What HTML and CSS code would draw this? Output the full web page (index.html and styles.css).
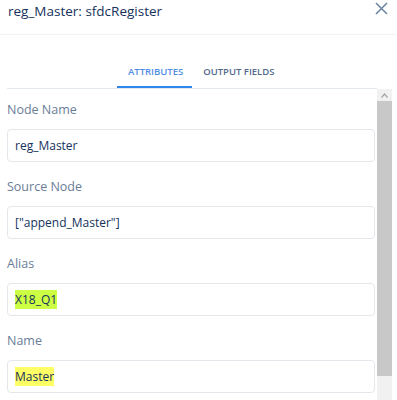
FILE: index.html
```html
<!DOCTYPE html>
<html lang="en">

<head>
    <meta charset="UTF-8">
    <meta name="viewport" content="width=device-width, initial-scale=1.0">
    <title>reg_Master: sfdcRegister</title>
    <link rel="stylesheet" href="styles.css">
</head>

<body>
    <div class="header">
        <div class="title">reg_Master: sfdcRegister</div>
        <button class="close" aria-label="Close">
            <svg width="13" height="13" viewBox="0 0 13 13">
                <path d="M1 1 L12 12 M12 1 L1 12" stroke="#6f87a6" stroke-width="1.6" fill="none" />
            </svg>
        </button>
    </div>

    <div class="body">
        <div class="tabs">
            <div class="tab active">ATTRIBUTES</div>
            <div class="tab">OUTPUT FIELDS</div>
        </div>

        <div class="scrollArea">
            <div class="fields">
                <div class="field">
                    <div class="label">Node Name</div>
                    <div class="input">reg_Master</div>
                </div>
                <div class="field">
                    <div class="label">Source Node</div>
                    <div class="input">["append_Master"]</div>
                </div>
                <div class="field">
                    <div class="label">Alias</div>
                    <div class="input"><span class="mark green">X18_Q1</span></div>
                </div>
                <div class="field">
                    <div class="label">Name</div>
                    <div class="input"><span class="mark yellow">Master</span></div>
                </div>
            </div>
            <div class="scrollbar">
                <div class="arrow">
                    <svg width="7" height="5" viewBox="0 0 7 5">
                        <path d="M0.5 4.5 L3.5 1 L6.5 4.5" stroke="#a8a8a8" stroke-width="1.4" fill="none" />
                    </svg>
                </div>
                <div class="thumb"></div>
                <div class="track"></div>
            </div>
        </div>
    </div>
</body>

</html>
```

FILE: styles.css
```css
body {
    margin: 0;
    height: 100vh;
    overflow: hidden;
    background-color: white;
    font-family: "Open Sans", sans-serif;
    color: #16325c;
}

.header {
    height: 34px;
    display: flex;
    justify-content: space-between;
    align-items: flex-start;
    border-bottom: 1px solid #f0f2f4;
}

.title {
    padding: 1px 0 0 8px;
    font-size: 13.5px;
    line-height: 20px;
    color: #16325c;
}

.close {
    margin: 2px 9px 0 0;
    padding: 0;
    border: none;
    background: none;
    width: 13px;
    height: 13px;
}

.body {
    padding: 0 5px 0 7px;
}

.tabs {
    height: 54px;
    box-sizing: border-box;
    display: flex;
    justify-content: flex-start;
    align-items: flex-end;
    padding-left: 110px;
    border-bottom: 1px solid #e4e9f0;
    margin-right: 15px;
}

.tab {
    padding: 0 9px 0 11px;
    height: 30px;
    line-height: 27px;
    font-size: 9.5px;
    font-weight: 600;
    color: #54698d;
    box-sizing: border-box;
}

.tab.active {
    color: #4f8ee6;
    border-bottom: 2px solid #2f86eb;
}

.scrollArea {
    display: flex;
    height: 311px;
}

.fields {
    flex: 1;
    display: flex;
    flex-direction: column;
    gap: 17px;
    padding-top: 13px;
    padding-right: 2px;
}

.label {
    font-size: 12.5px;
    line-height: 16px;
    color: #6a7d98;
    margin-bottom: 11px;
}

.input {
    height: 33px;
    box-sizing: border-box;
    border: 1px solid #e3e7ec;
    border-radius: 4px;
    padding: 0 7px;
    display: flex;
    align-items: center;
    font-size: 12px;
    color: #16325c;
}

.mark {
    padding: 1px 0;
}

.green {
    background-color: #ccff44;
}

.yellow {
    background-color: #ffff66;
}

.scrollbar {
    width: 15px;
    display: flex;
    flex-direction: column;
}

.arrow {
    height: 12px;
    background-color: #f1f1f1;
    display: flex;
    justify-content: center;
    align-items: center;
}

.thumb {
    height: 275px;
    background-color: #c8c8c8;
}

.track {
    flex: 1;
    background-color: #f1f1f1;
}
```
